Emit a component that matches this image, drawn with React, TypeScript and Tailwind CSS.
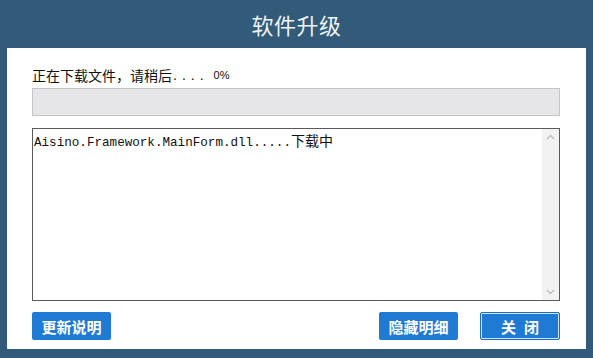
import React from "react";

export default function App() {
  return (
    <div className="w-[593px] h-[358px] bg-[#325a79] flex flex-col" style={{ fontFamily: '"Noto Sans CJK SC", "Noto Sans", sans-serif' }}>
      <div className="h-[48px] flex items-center justify-center text-[#eef3f7] text-[22px] leading-none pb-[1px] tracking-[0.5px]">
        软件升级
      </div>
      <div className="mx-[7px] h-[301px] bg-white flex flex-col pl-[25px] pr-[26px]">
        <div className="mt-[19px] h-[16px] flex items-center text-[14px] leading-none text-[#111]">
          <span>正在下载文件，请稍后</span>
          <span className="ml-[1px] text-[14px] tracking-[5px]" style={{ fontFamily: '"Liberation Sans", sans-serif' }}>....</span>
          <span className="ml-[5px] text-[11px]" style={{ fontFamily: '"Liberation Sans", sans-serif' }}>0%</span>
        </div>
        <div className="mt-[5px] h-[28px] bg-[#e6e6e8] border border-[#c4c4c4]"></div>
        <div className="mt-[12px] h-[173px] border border-[#5a5a5a] flex">
          <div className="flex-1 pl-[1px] pt-[2px] text-[#111] leading-[16px]">
            <span className="text-[12.6px]" style={{ fontFamily: '"Liberation Mono", monospace' }}>Aisino.Framework.MainForm.dll.....</span>
            <span className="text-[14px]">下载中</span>
          </div>
          <div className="w-[17px] bg-[#f2f2f2] flex flex-col items-center justify-between py-[5px]">
            <svg width="9" height="6" viewBox="0 0 9 6"><path d="M1 5 L4.5 1.5 L8 5" stroke="#bdbdbd" strokeWidth="1.4" fill="none" /></svg>
            <svg width="9" height="6" viewBox="0 0 9 6"><path d="M1 1 L4.5 4.5 L8 1" stroke="#bdbdbd" strokeWidth="1.4" fill="none" /></svg>
          </div>
        </div>
        <div className="mt-[11px] flex items-center">
          <button className="w-[79px] h-[28px] bg-[#1f7ad3] rounded-[2px] text-white text-[15px] font-semibold leading-none">更新说明</button>
          <div className="flex-1"></div>
          <button className="w-[79px] h-[28px] bg-[#1f7ad3] rounded-[2px] text-white text-[15px] font-semibold leading-none">隐藏明细</button>
          <button className="ml-[22px] w-[80px] h-[28px] bg-[#1f7ad3] rounded-[2px] border border-[#1a6fc4] outline outline-1 -outline-offset-2 outline-white/80 text-white text-[15px] font-semibold leading-none tracking-[8px] pl-[8px]">关闭</button>
        </div>
      </div>
    </div>
  );
}
